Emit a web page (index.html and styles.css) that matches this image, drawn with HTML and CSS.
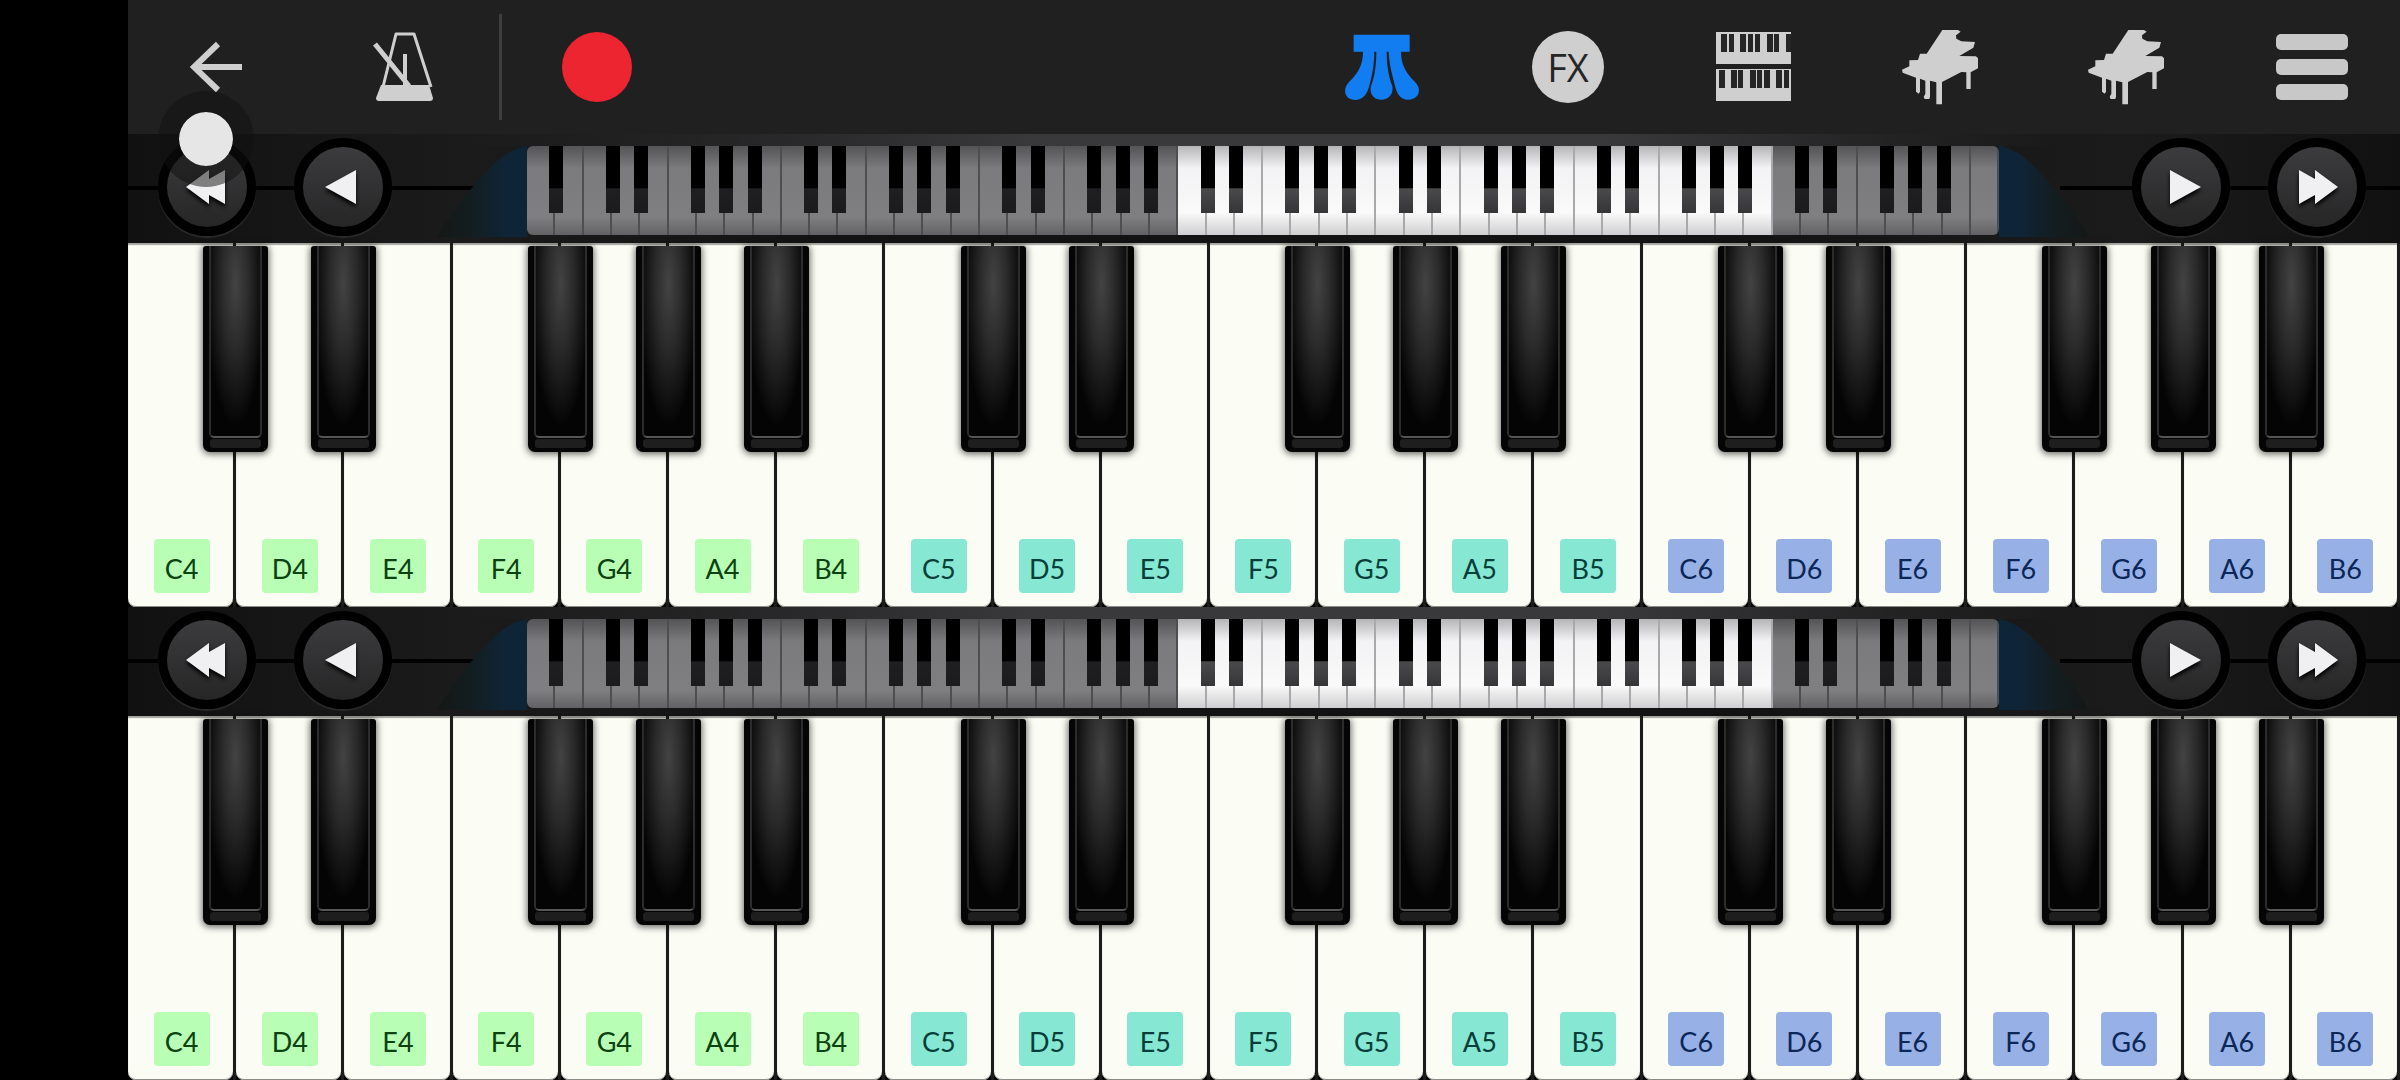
FILE: index.html
```
<!DOCTYPE html>
<html lang="en">
<head>
    <meta charset="UTF-8">
    <meta name="viewport" content="width=device-width, initial-scale=1.0">
    <title>Piano</title>
    <link rel="stylesheet" href="styles.css">
</head>
<body>
    <div class="app">
        <header class="toolbar">
            <button class="tool" aria-label="Back">
                <svg width="52" height="52" viewBox="0 0 52 52" fill="none" stroke="#cfcfcf" stroke-width="6">
                    <path d="M52 26H4M28 3L4 26L28 49"/>
                </svg>
            </button>
            <button class="tool metronome" aria-label="Metronome">
                <svg width="62" height="70" viewBox="0 0 62 70" fill="none" stroke="#cfcfcf" stroke-width="3">
                    <path d="M10 55L23 2H41L58 55" stroke-linejoin="round"/>
                    <path d="M32 22V54" stroke-width="4"/>
                    <path d="M2 12L36 54" stroke-width="5"/>
                    <path d="M8 53H56L60 66Q60 69 57 69H6Q3 69 3 66Z" fill="#cfcfcf" stroke="none"/>
                </svg>
            </button>
            <span class="divider"></span>
            <button class="tool" aria-label="Record"><span class="record"></span></button>
            <span class="spacer"></span>
            <div class="tools">
                <button class="tool" aria-label="Pedal">
                    <svg width="76" height="76" viewBox="27 29 228 228" fill="#127df0">
                        <path d="M56 46H224V97H198C198 132 209 156 240 188C262 210 252 240 220 241C194 241 186 222 180 200C172 165 163 140 161 97H155C155 140 162 175 172 200C176 225 160 241 139 241C118 241 102 225 108 200C118 175 124 140 124 97H118C117 140 112 165 104 195C98 222 86 241 62 242C30 242 20 212 42 188C73 158 84 132 84 97H56Z"/>
                    </svg>
                </button>
                <button class="tool" aria-label="Effects"><span class="fx">FX</span></button>
                <button class="tool" aria-label="Dual keyboard">
                    <svg width="76" height="70" viewBox="0 0 76 70">
                        <path d="M0 0H75V32H0ZM0 37H75V69H0Z" fill="#cfcfcf"/>
                        <path d="M5 2h6v18h-6zM13 2h5v18h-5zM24 2h6v18h-6zM32 2h5v18h-5zM39 2h5v18h-5zM51 2h6v18h-6zM58 2h5v18h-5zM70 2h5v18h-5zM3 38h6v18h-6zM15 38h6v18h-6zM22 38h5v18h-5zM34 38h6v18h-6zM41 38h5v18h-5zM48 38h6v18h-6zM60 38h6v18h-6zM68 38h5v18h-5z" fill="#262626"/>
                    </svg>
                </button>
                <button class="tool" aria-label="Upper instrument">
                    <svg width="76" height="76" viewBox="34 28 228 228" fill="#cfcfcf">
                        <path d="M155 31H202L210 36L196 47L197 57L212 65L253 67L248 84L206 109L256 110L262 116V146L240 158V208H227V158L212 157L154 187V254H137V188L118 183V231L116 238H102L99 232L104 222V183L88 177V216L84 222L76 216V174L36 159L34 150L56 140V122L82 121L88 102H108Z"/>
                    </svg>
                </button>
                <button class="tool" aria-label="Lower instrument">
                    <svg width="76" height="76" viewBox="34 28 228 228" fill="#cfcfcf">
                        <path d="M155 31H202L210 36L196 47L197 57L212 65L253 67L248 84L206 109L256 110L262 116V146L240 158V208H227V158L212 157L154 187V254H137V188L118 183V231L116 238H102L99 232L104 222V183L88 177V216L84 222L76 216V174L36 159L34 150L56 140V122L82 121L88 102H108Z"/>
                    </svg>
                </button>
                <button class="tool" aria-label="Menu">
                    <span class="menu"><i></i><i></i><i></i></span>
                </button>
            </div>
        </header>

        <section class="keyboard">
            <nav class="range">
                <button class="round" aria-label="Octave down"><svg width="42" height="36" viewBox="0 0 42 36"><path d="M0 18L23 1V10L39 1V35L23 26V35Z"/></svg></button>
                <button class="round" aria-label="Key down"><svg width="42" height="36" viewBox="0 0 42 36"><path d="M3 18L34 1V35Z"/></svg></button>
                <div class="overview">
                    <svg class="fan" viewBox="0 0 90 91" preserveAspectRatio="none"><path d="M90 0C72 3 60 14 38 38C24 56 10 74 0 91H90Z" fill="url(#glow)"/></svg>
                    <div class="mini"></div>
                    <svg class="fan right" viewBox="0 0 90 91" preserveAspectRatio="none"><path d="M90 0C72 3 60 14 38 38C24 56 10 74 0 91H90Z" fill="url(#glow)"/></svg>
                </div>
                <button class="round" aria-label="Key up"><svg width="42" height="36" viewBox="0 0 42 36"><path d="M10 1L41 18L10 35Z"/></svg></button>
                <button class="round" aria-label="Octave up"><svg width="42" height="36" viewBox="0 0 42 36"><path d="M3 1L19 10V1L42 18L19 35V26L3 35Z"/></svg></button>
            </nav>
            <div class="keys"></div>
        </section>

        <section class="keyboard">
            <nav class="range">
                <button class="round" aria-label="Octave down"><svg width="42" height="36" viewBox="0 0 42 36"><path d="M0 18L23 1V10L39 1V35L23 26V35Z"/></svg></button>
                <button class="round" aria-label="Key down"><svg width="42" height="36" viewBox="0 0 42 36"><path d="M3 18L34 1V35Z"/></svg></button>
                <div class="overview">
                    <svg class="fan" viewBox="0 0 90 91" preserveAspectRatio="none"><path d="M90 0C72 3 60 14 38 38C24 56 10 74 0 91H90Z" fill="url(#glow)"/></svg>
                    <div class="mini"></div>
                    <svg class="fan right" viewBox="0 0 90 91" preserveAspectRatio="none"><path d="M90 0C72 3 60 14 38 38C24 56 10 74 0 91H90Z" fill="url(#glow)"/></svg>
                </div>
                <button class="round" aria-label="Key up"><svg width="42" height="36" viewBox="0 0 42 36"><path d="M10 1L41 18L10 35Z"/></svg></button>
                <button class="round" aria-label="Octave up"><svg width="42" height="36" viewBox="0 0 42 36"><path d="M3 1L19 10V1L42 18L19 35V26L3 35Z"/></svg></button>
            </nav>
            <div class="keys"></div>
        </section>

        <span class="touch"></span>
    </div>

    <svg class="defs" width="0" height="0">
        <linearGradient id="glow">
            <stop offset="0" stop-color="#141716"/>
            <stop offset="0.35" stop-color="#131d1f"/>
            <stop offset="0.75" stop-color="#0f2436"/>
            <stop offset="1" stop-color="#0d2538"/>
        </linearGradient>
    </svg>

    <script>
        const notes = ['C', 'D', 'E', 'F', 'G', 'A', 'B'];
        const hasSharp = ['C', 'D', 'F', 'G', 'A'];
        const firstOctave = 4;
        const visibleKeys = 21;

        // playable keys
        document.querySelectorAll('.keys').forEach(keys => {
            for (let i = 0; i < visibleKeys; i++) {
                const note = notes[i % 7];
                const octave = firstOctave + Math.floor(i / 7);
                const slot = document.createElement('div');
                slot.className = 'slot';
                slot.innerHTML = `<button class="white"><span class="label octave-${octave}">${note}${octave}</span></button>`;
                if (hasSharp.includes(note)) {
                    slot.innerHTML += `<button class="black" aria-label="${note} sharp ${octave}"></button>`;
                }
                keys.appendChild(slot);
            }
        });

        // 88-key overview, starts on A0
        document.querySelectorAll('.mini').forEach(mini => {
            for (let i = 0; i < 52; i++) {
                const note = notes[(i + 5) % 7];
                const octave = Math.floor((i + 5) / 7);
                const key = document.createElement('span');
                key.className = 'mini-key';
                if (octave >= firstOctave && octave < firstOctave + 3) {
                    key.classList.add('active');
                }
                if (hasSharp.includes(note) && i < 51) {
                    key.classList.add('sharp');
                }
                mini.appendChild(key);
            }
        });
    </script>
</body>
</html>
```
FILE: styles.css
```
* {
    box-sizing: border-box;
}

body {
    margin: 0;
    padding-left: 128px;
    background: #000;
    font-family: Lato, "Open Sans", sans-serif;
}

button {
    margin: 0;
    padding: 0;
    border: none;
    background: none;
    font: inherit;
    cursor: pointer;
}

.app {
    position: relative;
    display: flex;
    flex-direction: column;
    height: 100vh;
    overflow: hidden;
}

/* toolbar */
.toolbar {
    display: flex;
    align-items: center;
    height: 134px;
    background: #202020;
}

.tool {
    display: flex;
    justify-content: center;
    align-items: center;
    width: 176px;
    height: 134px;
}

.metronome {
    margin-left: 12px;
}

.divider {
    width: 3px;
    height: 106px;
    margin: 0 7px;
    background: #3e3e3e;
}

.record {
    width: 70px;
    height: 70px;
    border-radius: 50%;
    background: #ec2530;
}

.spacer {
    flex: 1;
}

.tools {
    display: flex;
    gap: 10px;
}

.fx {
    width: 72px;
    height: 72px;
    border-radius: 50%;
    background: #cfcfcf;
    color: #262626;
    font-family: "Open Sans", sans-serif;
    font-size: 38px;
    line-height: 72px;
    text-align: center;
}

.menu {
    display: flex;
    flex-direction: column;
    gap: 9px;
    width: 72px;
}

.menu i {
    height: 16px;
    border-radius: 5px;
    background: #c8c8c8;
}

/* range bar */
.keyboard {
    flex: 1;
    display: flex;
    flex-direction: column;
}

.range {
    display: flex;
    align-items: center;
    gap: 38px;
    height: 109px;
    padding: 0 34px 0 30px;
    background:
        linear-gradient(#000, #000) left 52px / 347px 4px no-repeat,
        linear-gradient(#000, #000) right 52px / 340px 4px no-repeat,
        linear-gradient(90deg, transparent 15%, #39393b 40%, #39393b 65%, transparent 85%) top / 100% 12px no-repeat,
        linear-gradient(90deg, #111112, #1b1b1b 15%, #131314 30%, #131314 70%, #1b1b1b 88%, #111112);
}

.round {
    display: flex;
    justify-content: center;
    align-items: center;
    width: 98px;
    height: 98px;
    margin-bottom: 4px;
    border: 9px solid #000;
    border-radius: 50%;
    background: linear-gradient(#3c3b3d, #262627);
    box-shadow: 0 2px 1px #2b2b2b;
}

.round svg {
    fill: #f0eff1;
    filter: drop-shadow(0 3px 2px #000);
}

.overview {
    align-self: flex-end;
    flex: 1;
    display: flex;
    padding: 0 5px 6px 7px;
}

.fan {
    width: 90px;
    height: 91px;
}

.right {
    transform: scaleX(-1);
}

.mini {
    flex: 1;
    display: flex;
    height: 89px;
    border-radius: 6px;
    overflow: hidden;
}

.mini-key {
    position: relative;
    flex: 1;
    border-right: 2px solid #4e4d4f;
    background: linear-gradient(#545355, #7b7a7c 25%, #7f7e80 80%, #626163);
}

.mini-key.active {
    border-right-color: #a9a8aa;
    background: linear-gradient(#b5b4b6, #f3f2f4 25%, #fafafa 75%, #cfced0);
}

.mini-key.sharp::after {
    content: "";
    position: absolute;
    z-index: 1;
    top: 0;
    right: -10px;
    width: 14px;
    height: 67px;
    background: linear-gradient(#000 62%, #1f1e20 64%, #1b1a1c);
}

.mini-key.active.sharp::after {
    background: linear-gradient(#000 62%, #4a494b 64%, #353436);
}

/* keys */
.keys {
    flex: 1;
    display: flex;
    background: #111;
}

.slot {
    position: relative;
    flex: 1;
    display: flex;
    border-right: 3px solid #1c1c1a;
    background: #050505;
}

.white {
    flex: 1;
    display: flex;
    justify-content: center;
    align-items: flex-end;
    padding: 0 0 14px 2px;
    border-radius: 0 0 8px 8px;
    background: #fbfcf4;
    box-shadow: inset 0 2px 1px #a5a5a0, inset 0 -1px 0 #8b8b86;
}

.label {
    width: 56px;
    height: 54px;
    padding-top: 3px;
    border-radius: 4px;
    font-size: 27px;
    line-height: 54px;
    text-align: center;
}

.octave-4 {
    background: #b9feb5;
    color: #0b420f;
}

.octave-5 {
    background: #86e8d3;
    color: #063f3a;
}

.octave-6 {
    background: #97b1e6;
    color: #0c2658;
}

.black {
    position: absolute;
    z-index: 1;
    top: 3px;
    right: -35px;
    width: 65px;
    height: 206px;
    border-radius: 3px 3px 7px 7px;
    background: #050505;
    box-shadow: 0 1px 7px 1px rgba(0, 0, 0, 0.6);
}

.black::before {
    content: "";
    position: absolute;
    inset: 0 6px 14px;
    border: 2px solid;
    border-top: none;
    border-color: transparent #2c2c2c #555 #2c2c2c;
    border-radius: 0 0 5px 5px;
    background: radial-gradient(ellipse 60% 75% at 50% 20%, #434343, #2a2a2a 45%, #040404);
}

.black::after {
    content: "";
    position: absolute;
    inset: auto 7px 4px;
    height: 9px;
    border-radius: 3px;
    background: #1e1e1e;
}

/* touch marker */
.touch {
    position: absolute;
    z-index: 2;
    top: 91px;
    left: 30px;
    width: 96px;
    height: 96px;
    border: 21px solid rgba(16, 16, 16, 0.5);
    border-radius: 50%;
    background: #e6e6e6;
    background-clip: padding-box;
    pointer-events: none;
}
```
